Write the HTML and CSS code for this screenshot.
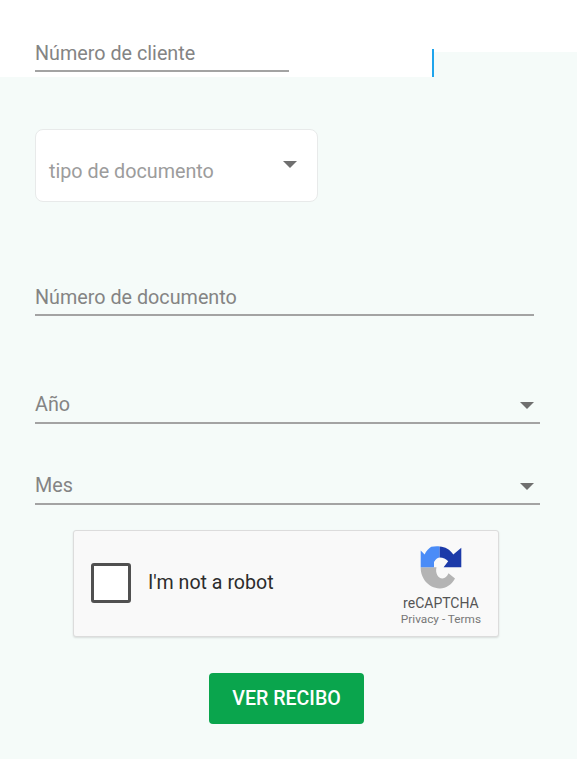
FILE: index.html
```html
<!DOCTYPE html>
<html lang="es">
<head>
<meta charset="utf-8">
<title>Ver recibo</title>
<link rel="stylesheet" href="styles.css">
</head>
<body>
<div class="top">
  <div class="top-left">
    <div class="field field-client"><span class="label">Número de cliente</span></div>
  </div>
  <div class="top-rule"></div>
  <div class="top-right"></div>
</div>
<main class="form">
  <div class="card-select">
    <span class="card-text">tipo de documento</span>
    <span class="caret caret-card"></span>
  </div>
  <div class="field field-doc"><span class="label">Número de documento</span></div>
  <div class="field field-select field-year"><span class="label">Año</span><span class="caret"></span></div>
  <div class="field field-select field-month"><span class="label">Mes</span><span class="caret"></span></div>
  <div class="captcha">
    <span class="check"></span>
    <span class="robot">I'm not a robot</span>
    <div class="brand">
      <svg class="logo" viewBox="0 0 44 44" width="44" height="44" aria-hidden="true">
        <path fill="#b4b4b4" d="M1.7 21.3H17.5C16 27 19 32.5 23.5 32.5C26 32.5 28 30.5 29.5 27.3L36 32.5C32.5 39 26.5 42.6 20.7 42.4C9 42 1.5 32 1.7 21.3Z"/>
        <path fill="#4a8cf7" d="M12.3 .8C15 .2 18 0 20.7 .4V11.5C19 11.7 17.5 12.5 16.4 14L15 16V21.3H1.7V4.6L5.6 8.4C7.2 5 9.5 2.6 12.3 .8Z"/>
        <path fill="#1c3aa9" d="M20.7 .4C26 .6 31 3.4 34.3 8.4L42.3 1.7V21.3H24.6L29.2 15.2C27.2 12.9 24 11.5 20.7 11.5Z"/>
      </svg>
      <span class="brand-name">reCAPTCHA</span>
      <span class="brand-links">Privacy - Terms</span>
    </div>
  </div>
  <button class="submit" type="button">VER RECIBO</button>
</main>
</body>
</html>
```

FILE: styles.css
```css
* { box-sizing: border-box; }

html, body { height: 100%; }

body {
  margin: 0;
  display: flex;
  flex-direction: column;
  overflow: hidden;
  background: #ffffff;
  font-family: Roboto, "Liberation Sans", sans-serif;
}

.top {
  display: flex;
  height: 77px;
  flex: none;
}

.top-left {
  width: 432px;
  padding: 36px 0 0 35px;
}

.top-rule {
  width: 2px;
  margin-top: 49px;
  background: #1fa5ec;
}

.top-right {
  flex: 1;
  margin-top: 52px;
  background: #f5fbf9;
}

.form {
  flex: 1;
  display: flex;
  flex-direction: column;
  align-items: flex-start;
  padding: 52px 0 0 35px;
  background: #f5fbf9;
}

.field {
  display: flex;
  align-items: center;
  justify-content: space-between;
  height: 36px;
  border-bottom: 2px solid #a3a3a3;
}

.field-client { width: 254px; }
.field-doc { width: 499px; margin-top: 78px; }
.field-select { width: 505px; padding-right: 6px; }
.field-year { margin-top: 72px; }
.field-month { margin-top: 45px; }

.label {
  font-size: 19.75px;
  font-weight: 400;
  color: #848484;
  line-height: 24px;
}

.field-client .label,
.field-doc .label {
  margin-top: 2px;
}

.card-select {
  display: flex;
  align-items: flex-start;
  justify-content: space-between;
  width: 283px;
  height: 73px;
  padding: 30px 20px 0 13px;
  background: #ffffff;
  border: 1px solid #e8eaea;
  border-radius: 8px;
}

.card-text {
  font-size: 19.75px;
  line-height: 24px;
  color: #9c9c9c;
}

.caret {
  width: 0;
  height: 0;
  border-left: 7px solid transparent;
  border-right: 7px solid transparent;
  border-top: 7px solid #6f6f6f;
}

.caret-card {
  margin-top: 1px;
  border-left-width: 7.5px;
  border-right-width: 7.5px;
}

.captcha {
  display: flex;
  align-items: center;
  width: 426px;
  height: 107px;
  margin: 25px 0 0 38px;
  padding: 0 17px 0 17px;
  background: #f9f9f9;
  border: 1px solid #dcdcdc;
  border-radius: 3px;
  box-shadow: 0 1px 2px rgba(0, 0, 0, 0.12);
}

.check {
  flex: none;
  width: 40px;
  height: 40px;
  margin-top: -2px;
  background: #ffffff;
  border: 3px solid #505050;
  border-radius: 3px;
}

.robot {
  margin-left: 17px;
  margin-top: -2px;
  font-size: 19.6px;
  color: #2c2c2c;
}

.brand {
  margin-left: auto;
  display: flex;
  flex-direction: column;
  align-items: center;
  padding-top: 5px;
}

.logo { display: block; }

.brand-name {
  margin-top: 5px;
  font-size: 14px;
  line-height: 16px;
  color: #555555;
}

.brand-links {
  margin-top: 1px;
  font-size: 11.8px;
  line-height: 14px;
  color: #777777;
}

.submit {
  align-self: flex-start;
  width: 155px;
  height: 51px;
  margin: 36px 0 0 174px;
  padding: 0;
  border: 0;
  border-radius: 4px;
  background: #0aa54d;
  color: #ffffff;
  font-family: inherit;
  font-size: 19.6px;
  font-weight: 500;
}
```
